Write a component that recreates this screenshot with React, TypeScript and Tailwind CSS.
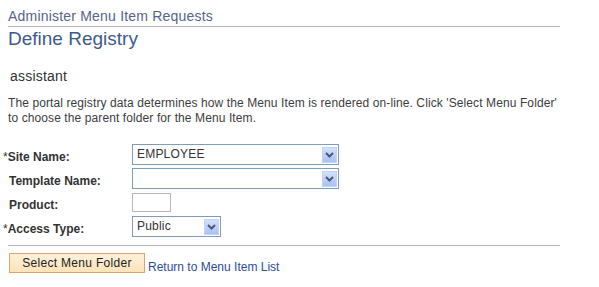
import React from "react";

function Chevron() {
  return (
    <svg width="9" height="6" viewBox="0 0 9 6" className="block">
      <path d="M1 1 L4.5 4.5 L8 1" fill="none" stroke="#4a5674" strokeWidth="2" />
    </svg>
  );
}

function Select({ value, width }: { value: string; width: string }) {
  return (
    <div
      className={`flex h-[21px] items-center justify-between border border-[#7f9db9] bg-white ${width}`}
    >
      <span className="pl-[4px] text-[12px] leading-[15px] tracking-[0.2px] text-[#333]">{value}</span>
      <div className="mr-[1px] flex h-[16px] w-[15px] items-center justify-center border border-[#c3d3f8] bg-gradient-to-b from-[#d3e0fb] to-[#a9c0f3]">
        <Chevron />
      </div>
    </div>
  );
}

function Label({ text, required }: { text: string; required?: boolean }) {
  return (
    <div className="w-[132px] shrink-0 pl-[9px] pt-[7px] text-[12px] font-bold leading-[15px] text-[#333]">
      {required && <span className="-ml-[6px] font-normal">*</span>}
      {text}
    </div>
  );
}

export default function App() {
  return (
    <div
      className="h-[287px] w-[599px] bg-white"
      style={{ fontFamily: '"Liberation Sans", Arial, sans-serif' }}
    >
      <div className="pl-[8px]">
        <div className="pt-[8px] text-[14px] leading-[16px] tracking-[0.2px] text-[#55648a]">
          Administer Menu Item Requests
        </div>
        <div className="mt-[2px] h-px w-[552px] bg-[#b4b4b4]" />
        <div className="mt-[1px] text-[19px] leading-[22px] text-[#3d5a8c]">Define Registry</div>
        <div className="mt-[18px] pl-[2px] text-[14px] leading-[16px] tracking-[0.2px] text-[#333]">assistant</div>
        <div className="mt-[12px] whitespace-nowrap text-[12px] leading-[15px] tracking-[0.1px] text-[#3c3c3c]">
          The portal registry data determines how the Menu Item is rendered on-line. Click 'Select Menu Folder'
          <br />
          to choose the parent folder for the Menu Item.
        </div>
      </div>

      <div className="mt-[17px] flex flex-col">
        <div className="flex h-[24px] items-start">
          <Label text="Site Name:" required />
          <div className="mt-[1px]">
            <Select value="EMPLOYEE" width="w-[207px]" />
          </div>
        </div>
        <div className="flex h-[24px] items-start">
          <Label text="Template Name:" />
          <div className="mt-[1px]">
            <Select value="" width="w-[207px]" />
          </div>
        </div>
        <div className="flex h-[24px] items-start">
          <Label text="Product:" />
          <div className="mt-[2px] h-[19px] w-[39px] border border-[#b8b8b8] bg-white" />
        </div>
        <div className="flex h-[24px] items-start">
          <Label text="Access Type:" required />
          <div className="mt-[1px]">
            <Select value="Public" width="w-[89px]" />
          </div>
        </div>
      </div>

      <div className="pl-[8px]">
        <div className="mt-[6px] h-px w-[552px] bg-[#b4b4b4]" />
        <div className="mt-[7px] flex items-end">
          <div className="ml-[1px] flex h-[20px] w-[136px] items-center justify-center border border-[#dba56e] bg-gradient-to-b from-[#fdf0da] to-[#fbe3b9] text-[12px] leading-[15px] tracking-[0.3px] text-[#222]">
            Select Menu Folder
          </div>
          <span className="-mb-[2px] ml-[3px] text-[12px] leading-[15px] text-[#2c4c9c]">Return to Menu Item List</span>
        </div>
      </div>
    </div>
  );
}
